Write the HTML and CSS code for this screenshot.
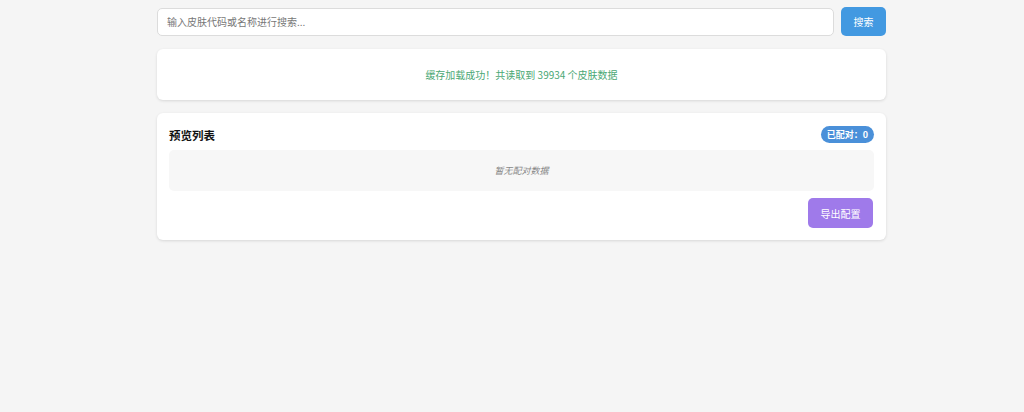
FILE: index.html
```html
<!DOCTYPE html>
<html lang="zh-CN">
<head>
    <meta charset="UTF-8">
    <meta name="viewport" content="width=device-width, initial-scale=1.0">
    <title>皮肤配对</title>
    <link rel="stylesheet" href="styles.css">
</head>
<body>

<div class="container">
    <div class="search-bar">
        <input type="text" class="search-input" placeholder="输入皮肤代码或名称进行搜索...">
        <button class="search-btn">搜索</button>
    </div>

    <div class="card status-card">
        <p class="status-msg">缓存加载成功！共读取到 39934 个皮肤数据</p>
    </div>

    <div class="card preview-card">
        <div class="preview-header">
            <h2>预览列表</h2>
            <span class="badge">已配对：0</span>
        </div>
        <div class="empty-box">暂无配对数据</div>
        <div class="actions">
            <button class="export-btn">导出配置</button>
        </div>
    </div>
</div>

</body>
</html>
```

FILE: styles.css
```css
* {
    margin: 0;
    padding: 0;
    box-sizing: border-box;
}

body {
    font-family: "Noto Sans CJK SC", "Noto Sans", sans-serif;
    background-color: #f5f5f5;
    min-height: 100vh;
}

.container {
    width: 729px;
    margin-left: 157px;
    padding-top: 7px;
}

.search-bar {
    display: flex;
    align-items: center;
    gap: 7px;
    margin-bottom: 13px;
}

.search-input {
    flex: 1;
    height: 28px;
    padding: 0 9px;
    border: 1px solid #dcdcdc;
    border-radius: 5px;
    font-family: inherit;
    font-size: 10px;
    color: #333;
    background: #fff;
    outline: none;
}

.search-input::placeholder {
    color: #777;
}

.search-btn {
    width: 45px;
    height: 29px;
    background-color: #4299e1;
    color: #fff;
    border: none;
    border-radius: 5px;
    font-family: inherit;
    font-size: 10px;
    cursor: pointer;
}

.card {
    background-color: #fff;
    border-radius: 6px;
    box-shadow: 0 1px 3px rgba(0, 0, 0, 0.12);
    margin-bottom: 13px;
}

.status-card {
    height: 51px;
    display: flex;
    align-items: center;
    justify-content: center;
}

.status-msg {
    color: #4aa874;
    font-size: 10px;
}

.preview-card {
    padding: 12px 12px 12px;
}

.preview-header {
    display: flex;
    justify-content: space-between;
    align-items: center;
    height: 19px;
    margin-bottom: 6px;
}

.preview-header h2 {
    font-size: 11.5px;
    font-weight: bold;
    color: #111;
}

.badge {
    background-color: #4a90d9;
    color: #fff;
    font-size: 9px;
    font-weight: bold;
    padding: 2px 6px;
    border-radius: 10px;
    line-height: 13px;
}

.empty-box {
    height: 41px;
    background-color: #f7f7f7;
    border-radius: 5px;
    display: flex;
    align-items: center;
    justify-content: center;
    color: #888;
    font-size: 9px;
    font-style: italic;
    margin-bottom: 7px;
}

.actions {
    display: flex;
    justify-content: flex-end;
}

.export-btn {
    width: 65px;
    height: 30px;
    margin-right: 1px;
    background-color: #9f7aea;
    color: #fff;
    border: none;
    border-radius: 5px;
    font-family: inherit;
    font-size: 10px;
    cursor: pointer;
}
```
